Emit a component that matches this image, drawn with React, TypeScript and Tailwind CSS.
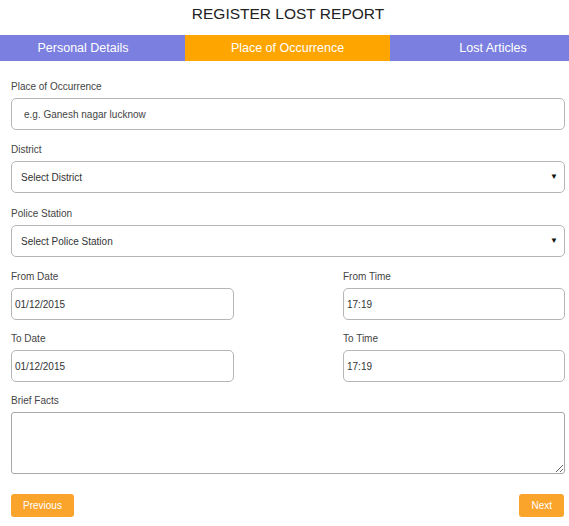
import { useState } from 'react';

const tabs = ['Personal Details', 'Place of Occurrence', 'Lost Articles'];

const tabCls = [
  'w-[185px] pr-[19px] bg-[#7b80e0]',
  'w-[205px] bg-[#ffa500]',
  'flex-1 pl-[27px] bg-[#7b80e0]',
];

const inputCls =
  'w-full h-[32px] border border-[#b5b5b5] rounded-[5px] bg-white text-[10px] text-[#333] focus:outline-none';

function Label({ children }: { children: React.ReactNode }) {
  return <label className="block text-[10px] leading-[12px] text-[#444] mb-[5px]">{children}</label>;
}

function SelectBox({ placeholder }: { placeholder: string }) {
  return (
    <div className="relative">
      <select className={`${inputCls} appearance-none pl-[9px] pr-6`} defaultValue="">
        <option value="">{placeholder}</option>
      </select>
      <span className="absolute right-[7px] top-1/2 -translate-y-1/2 text-[8px] text-[#111] pointer-events-none">
        ▼
      </span>
    </div>
  );
}

export default function App() {
  const [place, setPlace] = useState('');
  const [fromDate, setFromDate] = useState('01/12/2015');
  const [fromTime, setFromTime] = useState('17:19');
  const [toDate, setToDate] = useState('01/12/2015');
  const [toTime, setToTime] = useState('17:19');

  return (
    <div className="w-[569px] min-h-[526px] bg-white" style={{ fontFamily: '"Liberation Sans", Arial, sans-serif' }}>
      {/* Title */}
      <h1 className="h-[35px] pt-[5px] pl-[7px] text-center text-[15.5px] leading-[18px] text-[#222]">
        REGISTER LOST REPORT
      </h1>

      {/* Tabs */}
      <div className="flex h-[26px] text-[12.5px] text-white">
        {tabs.map((t, i) => (
          <div key={t} className={`flex items-center justify-center ${tabCls[i]}`}>
            {t}
          </div>
        ))}
      </div>

      {/* Form */}
      <form className="px-[11px] pt-[20px] pr-[4px]" onSubmit={(e) => e.preventDefault()}>
        <div className="mb-[14px]">
          <Label>Place of Occurrence</Label>
          <input
            value={place}
            onChange={(e) => setPlace(e.target.value)}
            placeholder="e.g. Ganesh nagar lucknow"
            className={`${inputCls} px-[12px] placeholder:text-[#444]`}
          />
        </div>

        <div className="mb-[15px]">
          <Label>District</Label>
          <SelectBox placeholder="Select District" />
        </div>

        <div className="mb-[14px]">
          <Label>Police Station</Label>
          <SelectBox placeholder="Select Police Station" />
        </div>

        <div className="grid grid-cols-[223px_222px] justify-between gap-y-[13px] mb-[13px]">
          <div>
            <Label>From Date</Label>
            <input value={fromDate} onChange={(e) => setFromDate(e.target.value)} className={`${inputCls} px-[3px]`} />
          </div>
          <div>
            <Label>From Time</Label>
            <input value={fromTime} onChange={(e) => setFromTime(e.target.value)} className={`${inputCls} px-[3px]`} />
          </div>
          <div>
            <Label>To Date</Label>
            <input value={toDate} onChange={(e) => setToDate(e.target.value)} className={`${inputCls} px-[3px]`} />
          </div>
          <div>
            <Label>To Time</Label>
            <input value={toTime} onChange={(e) => setToTime(e.target.value)} className={`${inputCls} px-[3px]`} />
          </div>
        </div>

        <div>
          <Label>Brief Facts</Label>
          <textarea className="block w-full h-[62px] border border-[#a9a9a9] rounded-[3px] text-[10px] focus:outline-none" />
        </div>

        <div className="flex justify-between mt-[20px]">
          <button type="button" className="h-[23px] px-[12px] rounded-[3px] bg-[#faa42c] text-white text-[10px]">
            Previous
          </button>
          <button type="submit" className="h-[23px] px-[12px] rounded-[3px] bg-[#faa42c] text-white text-[10px] mr-[1px]">
            Next
          </button>
        </div>
      </form>
    </div>
  );
}
